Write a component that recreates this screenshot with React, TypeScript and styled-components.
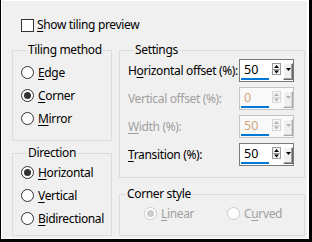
import React from 'react';
import styled, { createGlobalStyle } from 'styled-components';

const Global = createGlobalStyle`
  html, body { margin: 0; padding: 0; background: #000; }
  body { font-family: "Noto Sans", "Segoe UI", sans-serif; font-size: 12px; letter-spacing: -0.35px; color: #000; }
  #root { width: 312px; height: 242px; }
`;

const Frame = styled.div`
  width: 312px;
  height: 242px;
  box-sizing: border-box;
  background: #000;
  padding: 0 3px 3px 1px;
  display: flex;
`;

const Dialog = styled.div`
  flex: 1;
  background: #f0f0f0;
  border-top: 1px solid #fff;
  border-left: 1px solid #fff;
  border-right: 2px solid #fff;
  border-bottom: 1px solid #fff;
  display: flex;
  flex-direction: column;
  padding: 16px 0 0 10px;
  box-sizing: border-box;
`;

const CheckRow = styled.label`
  display: flex;
  align-items: center;
  height: 16px;
  margin-left: 9px;
  gap: 3px;
  line-height: 16px;
`;

const CheckBox = styled.span`
  width: 13px;
  height: 13px;
  box-sizing: border-box;
  border: 1px solid #333;
  background: #fff;
`;

const Main = styled.div`
  display: flex;
  gap: 7px;
  margin-top: 9px;
`;

const Column = styled.div<{ $w: number; $gap: number }>`
  width: ${(p) => p.$w}px;
  display: flex;
  flex-direction: column;
  gap: ${(p) => p.$gap}px;
`;

const Group = styled.fieldset<{ $h: number; $pt: number; $pl: number }>`
  margin: 0;
  box-sizing: border-box;
  height: ${(p) => p.$h}px;
  border: 1px solid #dcdcdc;
  padding: ${(p) => p.$pt}px 0 0 ${(p) => p.$pl}px;
  min-width: 0;
  display: flex;
  flex-direction: column;
`;

const Legend = styled.legend`
  padding: 0 1px;
  margin-left: 6px;
  line-height: 16px;
  height: 16px;
`;

const RadioRow = styled.label<{ $disabled?: boolean }>`
  display: flex;
  align-items: center;
  height: 23px;
  gap: 4px;
  color: ${(p) => (p.$disabled ? '#a0a0a0' : '#000')};
`;

const RadioCircle = styled.span<{ $checked?: boolean; $disabled?: boolean }>`
  width: 13px;
  height: 13px;
  box-sizing: border-box;
  border-radius: 50%;
  border: 1px solid ${(p) => (p.$disabled ? '#cccccc' : '#333')};
  background: #fff;
  display: flex;
  align-items: center;
  justify-content: center;
  &::after {
    content: '';
    display: ${(p) => (p.$checked ? 'block' : 'none')};
    width: 7px;
    height: 7px;
    border-radius: 50%;
    background: ${(p) => (p.$disabled ? '#cccccc' : '#333')};
  }
`;

const U = styled.span`
  text-decoration: underline;
  text-underline-offset: 2px;
`;

const Rows = styled.div`
  display: flex;
  flex-direction: column;
  gap: 5px;
`;

const FieldRow = styled.div<{ $disabled?: boolean }>`
  display: flex;
  align-items: center;
  justify-content: space-between;
  height: 23px;
  width: 166px;
  color: ${(p) => (p.$disabled ? '#a0a0a0' : '#000')};
`;

const SpinBox = styled.div<{ $disabled?: boolean }>`
  width: 55px;
  height: 23px;
  box-sizing: border-box;
  border: 1px solid ${(p) => (p.$disabled ? '#c4c4c4' : '#7a7a7a')};
  background: ${(p) => (p.$disabled ? '#f9f9f9' : '#fff')};
  display: flex;
  align-items: flex-start;
  padding: 2px 0 0 1px;
`;

const Field = styled.div<{ $color?: string }>`
  width: 28px;
  height: 18px;
  box-sizing: border-box;
  border-bottom: 2px solid #0078d7;
  padding-left: 3px;
  line-height: 16px;
  color: ${(p) => p.$color || '#000'};
  font-size: 12.5px;
  letter-spacing: 0;
`;

const UpDown = styled.div<{ $disabled?: boolean }>`
  width: 9px;
  height: 12px;
  margin: 1px 0 0 3px;
  box-sizing: border-box;
  border: 1px solid ${(p) => (p.$disabled ? '#d8d8d8' : '#9a9a9a')};
  background: #f4f4f4;
  display: flex;
  flex-direction: column;
  svg { display: block; }
`;

const DropBtn = styled.div<{ $disabled?: boolean }>`
  width: 10px;
  height: 17px;
  margin: 1px 0 0 2px;
  box-sizing: border-box;
  background: #f0f0f0;
  border-top: 1px solid #fff;
  border-left: 1px solid #fff;
  border-right: 1px solid ${(p) => (p.$disabled ? '#a8a8a8' : '#6a6a6a')};
  border-bottom: 1px solid ${(p) => (p.$disabled ? '#a8a8a8' : '#6a6a6a')};
  box-shadow: inset -1px -1px 0 ${(p) => (p.$disabled ? '#d8d8d8' : '#a0a0a0')};
  display: flex;
  justify-content: center;
  padding-top: 4px;
  svg { display: block; }
`;

const CornerRow = styled.div`
  display: flex;
  padding-left: 24px;
`;

const CornerItem = styled.div<{ $w?: number }>`
  width: ${(p) => (p.$w ? `${p.$w}px` : 'auto')};
`;

type SpinProps = { value: string; disabled?: boolean };

const Spin = ({ value, disabled }: SpinProps) => {
  const tri = disabled ? '#b4b4b4' : '#000';
  return (
    <SpinBox $disabled={disabled}>
      <Field $color={disabled ? '#d2a47c' : '#000'}>{value}</Field>
      <UpDown $disabled={disabled}>
        <svg width="7" height="5" viewBox="0 0 7 5">
          <path d="M3.5 1 L6 4 L1 4 Z" fill={tri} />
        </svg>
        <svg width="7" height="5" viewBox="0 0 7 5">
          <rect x="0" y="0" width="7" height="1" fill={disabled ? '#d8d8d8' : '#9a9a9a'} />
          <path d="M1 1.5 L6 1.5 L3.5 4.5 Z" fill={tri} />
        </svg>
      </UpDown>
      <DropBtn $disabled={disabled}>
        <svg width="5" height="3" viewBox="0 0 5 3">
          <path d="M0 0 L5 0 L2.5 3 Z" fill={tri} />
        </svg>
      </DropBtn>
    </SpinBox>
  );
};

const Radio = ({
  checked,
  disabled,
  children,
}: {
  checked?: boolean;
  disabled?: boolean;
  children: React.ReactNode;
}) => (
  <RadioRow $disabled={disabled}>
    <RadioCircle $checked={checked} $disabled={disabled} />
    <span>{children}</span>
  </RadioRow>
);

export default function App() {
  return (
    <>
      <Global />
      <Frame>
        <Dialog>
          <CheckRow>
            <CheckBox />
            <span>
              <U>S</U>how tiling preview
            </span>
          </CheckRow>
          <Main>
            <Column $w={100} $gap={4}>
              <Group $h={99} $pt={3} $pl={8}>
                <Legend>Tiling method</Legend>
                <Radio>
                  <U>E</U>dge
                </Radio>
                <Radio checked>
                  <U>C</U>orner
                </Radio>
                <Radio>
                  <U>M</U>irror
                </Radio>
              </Group>
              <Group $h={91} $pt={0} $pl={8}>
                <Legend>Direction</Legend>
                <Radio checked>
                  <U>H</U>orizontal
                </Radio>
                <Radio>
                  <U>V</U>ertical
                </Radio>
                <Radio>
                  <U>B</U>idirectional
                </Radio>
              </Group>
            </Column>
            <Column $w={186} $gap={8}>
              <Group $h={136} $pt={1} $pl={8}>
                <Legend>Settings</Legend>
                <Rows>
                  <FieldRow>
                    <span>
                      H<U>o</U>rizontal offset (%):
                    </span>
                    <Spin value="50" />
                  </FieldRow>
                  <FieldRow $disabled>
                    <span>Vertical offset (%):</span>
                    <Spin value="0" disabled />
                  </FieldRow>
                  <FieldRow $disabled>
                    <span>
                      <U>W</U>idth (%):
                    </span>
                    <Spin value="50" disabled />
                  </FieldRow>
                  <FieldRow>
                    <span>
                      <U>T</U>ransition (%):
                    </span>
                    <Spin value="50" />
                  </FieldRow>
                </Rows>
              </Group>
              <Group $h={50} $pt={0} $pl={0}>
                <Legend>Corner style</Legend>
                <CornerRow>
                  <CornerItem $w={83}>
                    <Radio checked disabled>
                      <U>L</U>inear
                    </Radio>
                  </CornerItem>
                  <CornerItem>
                    <Radio disabled>
                      C<U>u</U>rved
                    </Radio>
                  </CornerItem>
                </CornerRow>
              </Group>
            </Column>
          </Main>
        </Dialog>
      </Frame>
    </>
  );
}
